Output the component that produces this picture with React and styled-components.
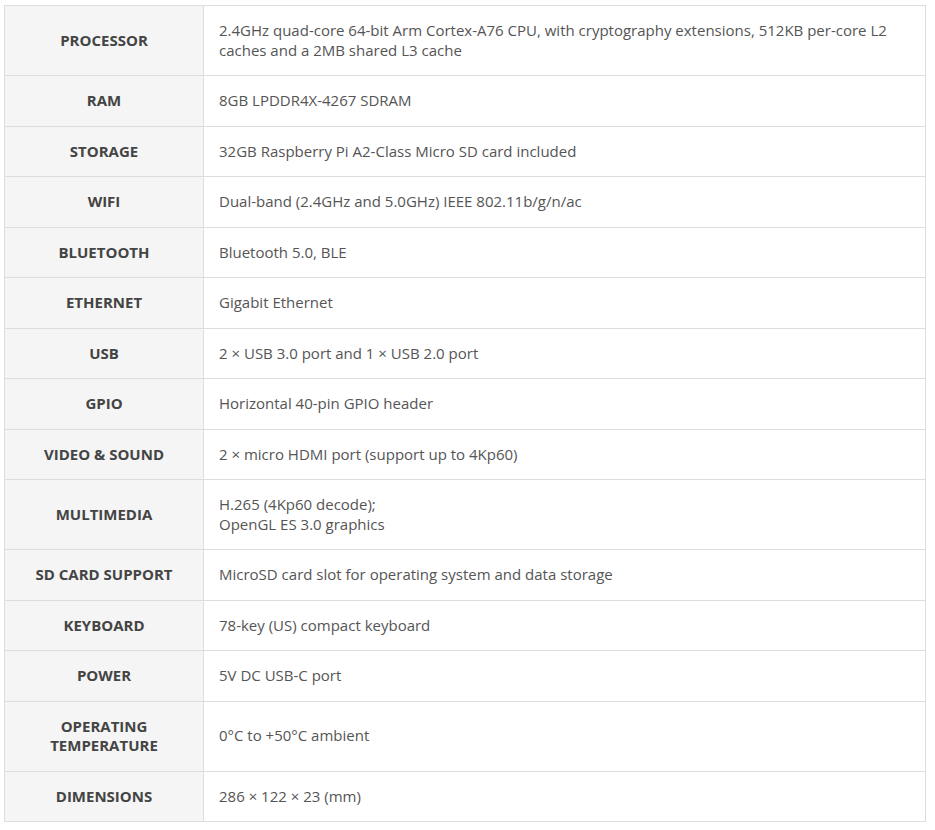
import React from "react";
import styled, { createGlobalStyle } from "styled-components";

const Global = createGlobalStyle`
  html, body { margin: 0; padding: 0; background: #fff; }
  body { font-family: "Open Sans", "Liberation Sans", sans-serif; }
`;

const Wrap = styled.div`
  padding: 5px 9px 0 4px;
`;

const Table = styled.table`
  width: 100%;
  border-collapse: collapse;
  border: 1px solid #dddddd;
  font-size: 15px;
  line-height: 19.5px;
`;

const Label = styled.th`
  width: 168px;
  background: #f5f5f5;
  border: 1px solid #dddddd;
  padding: 15px 15px;
  text-align: center;
  vertical-align: middle;
  font-weight: 700;
  color: #444444;
  text-transform: uppercase;
`;

const Value = styled.td`
  border: 1px solid #dddddd;
  padding: 15px 15px;
  text-align: left;
  vertical-align: middle;
  color: #555555;
`;

const rows = [
  ["Processor", "2.4GHz quad-core 64-bit Arm Cortex-A76 CPU, with cryptography extensions, 512KB per-core L2 caches and a 2MB shared L3 cache"],
  ["RAM", "8GB LPDDR4X-4267 SDRAM"],
  ["Storage", "32GB Raspberry Pi A2-Class Micro SD card included"],
  ["WiFi", "Dual-band (2.4GHz and 5.0GHz) IEEE 802.11b/g/n/ac"],
  ["Bluetooth", "Bluetooth 5.0, BLE"],
  ["Ethernet", "Gigabit Ethernet"],
  ["USB", "2 × USB 3.0 port and 1 × USB 2.0 port"],
  ["GPIO", "Horizontal 40-pin GPIO header"],
  ["Video & Sound", "2 × micro HDMI port (support up to 4Kp60)"],
  ["Multimedia", ["H.265 (4Kp60 decode);", "OpenGL ES 3.0 graphics"]],
  ["SD Card Support", "MicroSD card slot for operating system and data storage"],
  ["Keyboard", "78-key (US) compact keyboard"],
  ["Power", "5V DC USB-C port"],
  ["Operating Temperature", "0°C to +50°C ambient"],
  ["Dimensions", "286 × 122 × 23 (mm)"],
];

export default function App() {
  return (
    <>
      <Global />
      <Wrap>
        <Table>
          <tbody>
            {rows.map(([k, v]) => (
              <tr key={k}>
                <Label>{k}</Label>
                <Value>
                  {Array.isArray(v)
                    ? v.map((line, i) => (
                        <React.Fragment key={i}>
                          {i > 0 && <br />}
                          {line}
                        </React.Fragment>
                      ))
                    : v}
                </Value>
              </tr>
            ))}
          </tbody>
        </Table>
      </Wrap>
    </>
  );
}
